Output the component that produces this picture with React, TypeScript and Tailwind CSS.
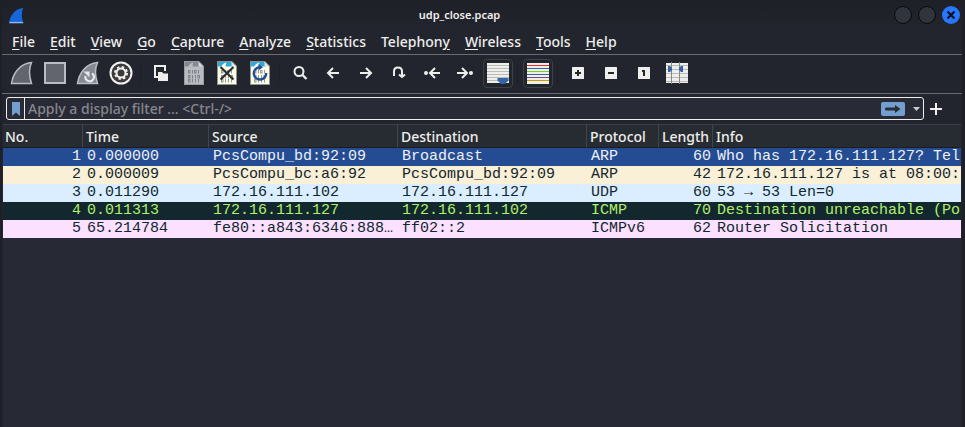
import React from "react";

const menus: [string, string, string][] = [
  ["", "F", "ile"],
  ["", "E", "dit"],
  ["", "V", "iew"],
  ["", "G", "o"],
  ["", "C", "apture"],
  ["", "A", "nalyze"],
  ["", "S", "tatistics"],
  ["Telephon", "y", ""],
  ["", "W", "ireless"],
  ["", "T", "ools"],
  ["", "H", "elp"],
];

const rows = [
  { tone: "bg-[#244c92] text-[#eef1f6]", cells: ["1", "0.000000", "PcsCompu_bd:92:09", "Broadcast", "ARP", "60", "Who has 172.16.111.127? Tel"] },
  { tone: "bg-[#faefd7] text-[#12272e]", cells: ["2", "0.000009", "PcsCompu_bc:a6:92", "PcsCompu_bd:92:09", "ARP", "42", "172.16.111.127 is at 08:00:"] },
  { tone: "bg-[#daeeff] text-[#12272e]", cells: ["3", "0.011290", "172.16.111.102", "172.16.111.127", "UDP", "60", "53 → 53 Len=0"] },
  { tone: "bg-[#12272e] text-[#b0f06c]", cells: ["4", "0.011313", "172.16.111.127", "172.16.111.102", "ICMP", "70", "Destination unreachable (Po"] },
  { tone: "bg-[#fce0ff] text-[#12272e]", cells: ["5", "65.214784", "fe80::a843:6346:888…", "ff02::2", "ICMPv6", "62", "Router Solicitation"] },
];

const headers = ["No.", "Time", "Source", "Destination", "Protocol", "Length", "Info"];

const FIN = "M1.5 22.5C3 12 10 2.500 21.500 1.500C18.500 8 19 15 21.500 22.500Z";

function Fin({ restart = false }: { restart?: boolean }) {
  return (
    <svg width="24" height="24" viewBox="0 0 24 24">
      <path d={FIN} fill={restart ? "#858992" : "#62656d"} stroke="#b9bcc3" strokeWidth="1.5" />
      {restart && (
        <g stroke="#e6e8ec" fill="none" strokeWidth="2.200">
          <path d="M16 12.500A4.200 4.200 0 1 1 9.600 15" />
          <path d="M7.500 10.500H13.500V16.500Z" fill="#e6e8ec" stroke="none" />
        </g>
      )}
    </svg>
  );
}

function Gear() {
  return (
    <svg width="24" height="24" viewBox="0 0 24 24" fill="none">
      <circle cx="12" cy="12" r="10.500" stroke="#f2f2f2" strokeWidth="2" fill="#3c3b3a" />
      <circle cx="12" cy="12" r="4.500" stroke="#f2f2f2" strokeWidth="2" />
      <circle cx="12" cy="12" r="6" stroke="#f2f2f2" strokeWidth="2" strokeDasharray="2.360 2.350" />
    </svg>
  );
}

function FileIcon({ kind }: { kind: "save" | "close" | "reload" }) {
  const grey = kind === "save";
  return (
    <svg width="20" height="24" viewBox="0 0 20 24">
      <path d="M0 0H15L20 5V24H0Z" fill={grey ? "#9a9ca2" : "#8d958f"} />
      <path d="M1 1H14.500L19 5.500V23H1Z" fill={grey ? "#babcc2" : "#fcfce8"} />
      <path d="M1 1H14.500L16 5.500H1Z" fill={grey ? "#85888f" : "#2fa8e0"} />
      <path d="M4 6C5 3.500 7 2 9.500 1.500C8.500 3.500 8.500 5 9 6Z" fill={grey ? "#babcc2" : "#fcfce8"} />
      <path d="M14.500 1V5.500H19Z" fill={grey ? "#d6d7da" : "#e4e6dc"} />
      <g stroke={grey ? "#80838a" : "#979b95"} fill="none" strokeWidth="1">
        {[9.5, 14.5, 18.5].map((y, i) => (
          <g key={y}>
            <rect x="4.500" y={y} width="1.500" height="2.500" />
            <path d={`M8.500 ${y - 0.5}v3.500`} />
            {i === 0 ? <rect x="10.500" y={y} width="1.500" height="2.500" /> : <path d={`M11.500 ${y - 0.5}v3.500`} />}
            {i === 1 ? <rect x="14" y={y} width="1.500" height="2.500" /> : <path d={`M14.500 ${y - 0.5}v3.500`} />}
          </g>
        ))}
      </g>
      {kind === "close" && <path d="M3.500 6L16.500 18.500M16.500 6L3.500 18.500" stroke="#2a2e33" strokeWidth="2.200" />}
      {kind === "reload" && (
        <g>
          <path d="M9 6.200A6.200 6.200 0 1 0 16.200 12" fill="none" stroke="#234f96" strokeWidth="2.400" />
          <path d="M8.500 3L13 6.200L8.500 9.500Z" fill="#234f96" />
        </g>
      )}
    </svg>
  );
}

function OpenIcon() {
  return (
    <svg width="16" height="16" viewBox="0 0 16 16">
      <path d="M5 12H2V1H12V6" fill="none" stroke="#eeeeec" strokeWidth="2" />
      <path d="M5 7H9L10.500 8.500H15V16H5Z" fill="#eeeeec" />
    </svg>
  );
}

function Stroke({ d, dot }: { d: string; dot?: number }) {
  return (
    <svg width="18" height="14" viewBox="0 0 18 14" fill="none" stroke="#eeeeec" strokeWidth="2">
      <path d={d} />
      {dot !== undefined && <circle cx={dot} cy="7" r="2" fill="#eeeeec" stroke="none" />}
    </svg>
  );
}

function SearchIcon() {
  return (
    <svg width="16" height="16" viewBox="0 0 16 16" fill="none" stroke="#eeeeec">
      <circle cx="7" cy="6.500" r="4.500" strokeWidth="2" />
      <path d="M10.500 10L14.500 14" strokeWidth="2.400" />
    </svg>
  );
}

function AutoScroll() {
  return (
    <svg width="22" height="21" viewBox="0 0 22 21">
      <path d="M0 0H22V20H0Z" fill="#eeeeec" />
      <path d="M0 2.500H22M0 5.500H22M0 8.500H22M0 11.500H22M0 14.500H22M0 17.500H22" stroke="#babdb6" />
      <path d="M10.500 15H21.500V17.500L18 21H14L10.500 17.500Z" fill="#3465a4" />
    </svg>
  );
}

function Colorize() {
  const lines = ["#ef2929", "#3465a4", "#73d216", "#3465a4", "#75507b", "#c4a000"];
  return (
    <svg width="22" height="21" viewBox="0 0 22 21">
      <path d="M0 0H22V21H0Z" fill="#eeeeec" />
      {lines.map((c, i) => (
        <path key={i} d={`M0 ${2.5 + i * 3}H22`} stroke={c} />
      ))}
    </svg>
  );
}

function Zoom({ d }: { d: string }) {
  return (
    <svg width="12" height="12" viewBox="0 0 12 12">
      <rect width="12" height="12" rx="0.500" fill="#eeeeec" />
      <path d={d} fill="none" stroke="#24272e" strokeWidth="2" />
    </svg>
  );
}

function ResizeColumns() {
  return (
    <svg width="22" height="22" viewBox="0 0 22 22">
      <path d="M0 1H22V21H0Z" fill="#eeeeec" />
      <path d="M0 3.500H22M0 7.500H22M0 11.500H22M0 15.500H22M0 19.500H22" stroke="#babdb6" />
      <path d="M5.500 0V22M13.500 0V22" stroke="#888a85" />
      <path d="M2 4H4L6 6V8L4 10H2ZM17 4H15L13 6V8L15 10H17Z" fill="#3465a4" />
    </svg>
  );
}

function Tool({ label, pressed, children }: { label: string; pressed?: boolean; children: React.ReactNode }) {
  return (
    <div className="flex w-[33px] shrink-0 justify-end pr-px">
      <button
        type="button"
        aria-label={label}
        aria-pressed={pressed}
        className={
          pressed
            ? "flex h-[29px] w-[30px] items-center justify-center rounded-sm border border-[#3d4149] bg-[#20262b]"
            : "flex h-[28px] w-[30px] items-center justify-center"
        }
      >
        {children}
      </button>
    </div>
  );
}

function Separator() {
  return <div className="mx-[3px] mt-1 h-5 w-px shrink-0 bg-[#1e2027]" />;
}

function WindowButton({ label }: { label: string }) {
  return (
    <button type="button" aria-label={label} className="size-[18px] rounded-full border border-[#08090b] bg-[#30343d]" />
  );
}

export default function App() {
  return (
    <div className="flex min-h-screen flex-col border-l-2 border-r-[3px] border-[#1e1f27] bg-[#23252e] font-['Noto_Sans',sans-serif] text-sm font-medium text-[#eeeeec]">
      <header className="flex h-[30px] items-center justify-between bg-linear-to-b from-[#1e2027] to-[#23252e] pr-[2px] pl-[6px]">
        <svg width="17" height="17" viewBox="0 0 24 24" aria-hidden="true">
          <path d={FIN} fill="#1667db" />
          <path d="M2 22H21.500" stroke="#8db6f2" strokeWidth="2" />
        </svg>
        <h1 className="text-[11px] font-semibold">udp_close.pcap</h1>
        <div className="flex gap-[6px]">
          <WindowButton label="Minimize" />
          <WindowButton label="Maximize" />
          <button type="button" aria-label="Close" className="flex size-[18px] items-center justify-center rounded-full bg-[#2777ff]">
            <svg width="10" height="10" viewBox="0 0 10 10">
              <path d="M1.500 1.500L8.500 8.500M8.500 1.500L1.500 8.500" stroke="#0c1220" strokeWidth="2.200" />
            </svg>
          </button>
        </div>
      </header>

      <nav className="flex h-[25px] gap-[15px] overflow-hidden border-b border-[#6b6c71] pl-[10px]">
        {menus.map(([a, b, c]) => (
          <button key={a + b + c} type="button" className="flex h-6 shrink-0 items-center">
            <span>
              {a}
              <span className="underline underline-offset-2">{b}</span>
              {c}
            </span>
          </button>
        ))}
      </nav>

      <div role="toolbar" aria-label="Main toolbar" className="flex h-[39px] items-start overflow-hidden border-b border-[#6b6c71] pt-1 pl-[3px]">
        <Tool label="Start capture"><Fin /></Tool>
        <Tool label="Stop capture">
          <span className="size-[22px] border-2 border-[#b9bcc3] bg-[#62656d]" />
        </Tool>
        <Tool label="Restart capture"><Fin restart /></Tool>
        <Tool label="Capture options"><Gear /></Tool>
        <Separator />
        <Tool label="Open"><OpenIcon /></Tool>
        <Tool label="Save"><FileIcon kind="save" /></Tool>
        <Tool label="Close file"><FileIcon kind="close" /></Tool>
        <Tool label="Reload"><FileIcon kind="reload" /></Tool>
        <Separator />
        <Tool label="Find packet"><SearchIcon /></Tool>
        <Tool label="Previous packet"><Stroke d="M15 7H4.500M9 2L4 7L9 12" /></Tool>
        <Tool label="Next packet"><Stroke d="M3 7H13.500M9 2L14 7L9 12" /></Tool>
        <Tool label="Go to packet"><Stroke d="M4 10V5.500Q4 1.500 8 1.500T12 5.500V10.500M9 8.500L12 11L15 8.500" /></Tool>
        <Tool label="First packet"><Stroke d="M17 7H8M12 2L7 7L12 12" dot={3} /></Tool>
        <Tool label="Last packet"><Stroke d="M1 7H10M6 2L11 7L6 12" dot={15} /></Tool>
        <Tool label="Auto scroll" pressed><AutoScroll /></Tool>
        <Separator />
        <Tool label="Colorize" pressed><Colorize /></Tool>
        <Separator />
        <Tool label="Zoom in"><Zoom d="M3 6H9M6 3V9" /></Tool>
        <Tool label="Zoom out"><Zoom d="M3 6H9" /></Tool>
        <Tool label="Normal size"><Zoom d="M4 4H6V9" /></Tool>
        <Tool label="Resize columns"><ResizeColumns /></Tool>
      </div>

      <div className="flex items-center pt-[3px] pr-5 pb-1 pl-1">
        <div className="flex h-[23px] flex-1 items-center rounded-[3px] border border-[#eeeeec] bg-[#282a36]">
          <button type="button" aria-label="Bookmarks" className="flex h-full w-[18px] items-center justify-center border-r border-[#eeeeec]">
            <svg width="8" height="14" viewBox="0 0 8 14">
              <path d="M0 0H8V14L4 10.500L0 14Z" fill="#729fcf" />
            </svg>
          </button>
          <input
            type="text"
            aria-label="Display filter"
            placeholder="Apply a display filter … <Ctrl-/>"
            className="h-full min-w-0 flex-1 bg-transparent pl-[3px] outline-none placeholder:text-[#85878c]"
          />
          <button type="button" aria-label="Apply filter" className="flex h-[14px] w-6 items-center justify-center rounded-[2px] bg-[#729fcf]">
            <svg width="16" height="8" viewBox="0 0 16 8">
              <path d="M1 2.500H10V0L15.500 4L10 8V5.500H1Q0 5.500 0 4T1 2.500Z" fill="#2a2d34" />
            </svg>
          </button>
          <button type="button" aria-label="Filter history" className="flex h-full w-[18px] items-center justify-center pl-1">
            <svg width="7" height="4" viewBox="0 0 7 4">
              <path d="M0 0H7L3.500 4Z" fill="#c9cacc" />
            </svg>
          </button>
        </div>
        <button type="button" aria-label="Add filter button" className="ml-[6px]">
          <svg width="12" height="12" viewBox="0 0 12 12">
            <path d="M0 6H12M6 0V12" stroke="#eeeeec" strokeWidth="2" />
          </svg>
        </button>
      </div>

      <main className="mx-px flex-1 overflow-hidden border-t border-[#3c3f46] bg-[#272934]">
        <table className="w-full table-fixed border-separate border-spacing-0">
          <colgroup>
            <col className="w-[80px]" />
            <col className="w-[126px]" />
            <col className="w-[189px]" />
            <col className="w-[189px]" />
            <col className="w-[72px]" />
            <col className="w-[54px]" />
            <col />
          </colgroup>
          <thead>
            <tr className="bg-[#272b32]">
              {headers.map((h) => (
                <th key={h} scope="col" className="h-[23px] border-r border-b border-r-[#42454c] border-b-[#1a1c22] p-0 pt-[2px] pl-[3px] text-left leading-5 font-medium whitespace-nowrap first:pl-[2px] last:border-r-0">
                  {h}
                </th>
              ))}
            </tr>
          </thead>
          <tbody className="font-['Liberation_Mono','DejaVu_Sans_Mono',monospace] text-[15px] font-normal">
            {rows.map((r) => (
              <tr key={r.cells[0]} className={`h-[18px] ${r.tone}`}>
                {r.cells.map((c, i) => (
                  <td
                    key={i}
                    className={
                      i === 0 || i === 5
                        ? "overflow-hidden p-0 pr-[2px] text-right leading-[18px] whitespace-nowrap"
                        : "overflow-hidden p-0 pl-1 leading-[18px] whitespace-nowrap"
                    }
                  >
                    {c}
                  </td>
                ))}
              </tr>
            ))}
          </tbody>
        </table>
      </main>
    </div>
  );
}
